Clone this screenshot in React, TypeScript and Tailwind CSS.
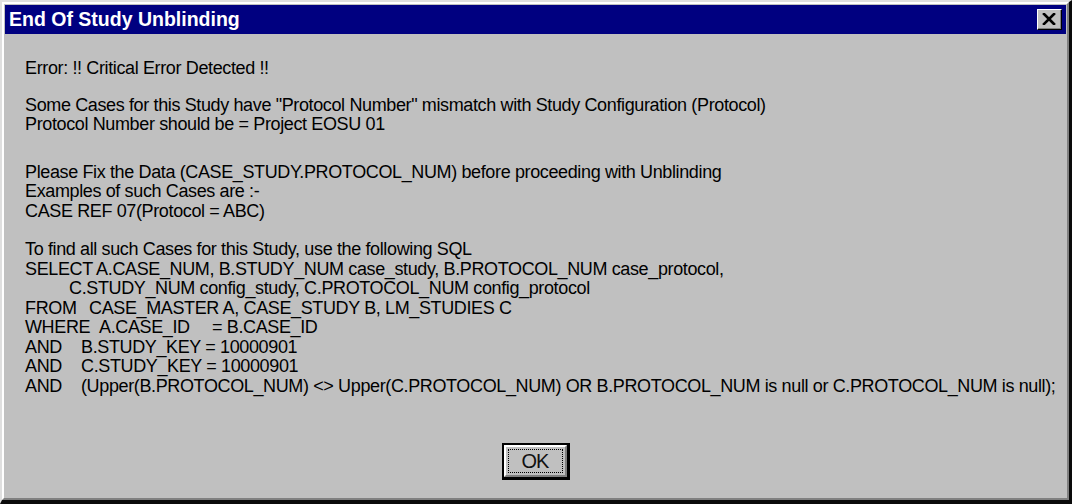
import React from "react";

const font = { fontFamily: '"Liberation Sans", Arial, sans-serif' };

const Line: React.FC<{ children: React.ReactNode; className?: string }> = ({ children, className = "" }) => (
  <div className={`h-[19.5px] leading-[19.5px] whitespace-pre ${className}`}>{children}</div>
);

const CloseButton: React.FC = () => (
  <div className="w-[25px] h-[21px] border-t border-l border-t-white border-l-white border-r border-b border-r-black border-b-black bg-[#c0c0c0]">
    <div className="w-full h-full border-r border-b border-r-[#808080] border-b-[#808080] flex items-center justify-center">
      <svg width="14" height="12" viewBox="0 0 14 12">
        <path d="M2 1 L12 11 M12 1 L2 11" stroke="#000" strokeWidth="2.6" strokeLinecap="square" />
      </svg>
    </div>
  </div>
);

export default function App() {
  return (
    <div className="w-[1072px] h-[504px] bg-[#c0c0c0]" style={font}>
      <div className="w-full h-full border-t-2 border-l-2 border-t-[#dfdfdf] border-l-[#dfdfdf] border-r-[3px] border-b-[4px] border-r-[#0a0a0a] border-b-[#0a0a0a]">
        <div className="w-full h-full border-t-2 border-l-2 border-white border-r-2 border-b-2 border-r-[#808080] border-b-[#808080] p-[1px] flex flex-col">
          {/* title bar */}
          <div className="h-[29px] bg-[#000080] flex items-center justify-between pl-[4px] pr-[4px]">
            <span className="text-white font-bold text-[19.5px] leading-none">End Of Study Unblinding</span>
            <CloseButton />
          </div>

          {/* message */}
          <div className="pl-[20px] pt-[25px] text-[18px] tracking-[-0.37px] text-black">
            <Line>Error: !! Critical Error Detected !!</Line>
            <div className="mt-[17px]">
              <Line>Some Cases for this Study have "Protocol Number" mismatch with Study Configuration (Protocol)</Line>
              <Line>Protocol Number should be = Project EOSU 01</Line>
            </div>
            <div className="mt-[28px]">
              <Line>Please Fix the Data (CASE_STUDY.PROTOCOL_NUM) before proceeding with Unblinding</Line>
              <Line>Examples of such Cases are :-</Line>
              <Line>CASE REF 07(Protocol = ABC)</Line>
            </div>
            <div className="mt-[19px]">
              <Line>To find all such Cases for this Study, use the following SQL</Line>
              <Line>SELECT A.CASE_NUM, B.STUDY_NUM case_study, B.PROTOCOL_NUM case_protocol,</Line>
              <Line className="pl-[44px]">C.STUDY_NUM config_study, C.PROTOCOL_NUM config_protocol</Line>
              <Line>
                <span className="inline-block w-[64px]">FROM</span>CASE_MASTER A, CASE_STUDY B, LM_STUDIES C
              </Line>
              <Line>
                <span className="inline-block w-[74px]">WHERE</span>
                <span className="inline-block w-[113px]">A.CASE_ID</span>= B.CASE_ID
              </Line>
              <Line>
                <span className="inline-block w-[56px]">AND</span>B.STUDY_KEY = 10000901
              </Line>
              <Line>
                <span className="inline-block w-[56px]">AND</span>C.STUDY_KEY = 10000901
              </Line>
              <Line>
                <span className="inline-block w-[56px]">AND</span>(Upper(B.PROTOCOL_NUM) &lt;&gt; Upper(C.PROTOCOL_NUM) OR B.PROTOCOL_NUM is null or C.PROTOCOL_NUM is null);
              </Line>
            </div>
          </div>

          {/* button */}
          <div className="flex justify-center mt-[47px]">
            <button className="w-[68px] h-[37px] border-2 border-r-[3px] border-b-[3px] border-black bg-[#c0c0c0] p-0">
              <div className="w-full h-full border-t-2 border-l-2 border-white border-r-2 border-b-2 border-r-[#808080] border-b-[#808080] p-[2px]">
                <div className="w-full h-full border border-dotted border-black flex items-center justify-center text-[20px] tracking-[-1px] text-[#111]">
                  OK
                </div>
              </div>
            </button>
          </div>
        </div>
      </div>
    </div>
  );
}
